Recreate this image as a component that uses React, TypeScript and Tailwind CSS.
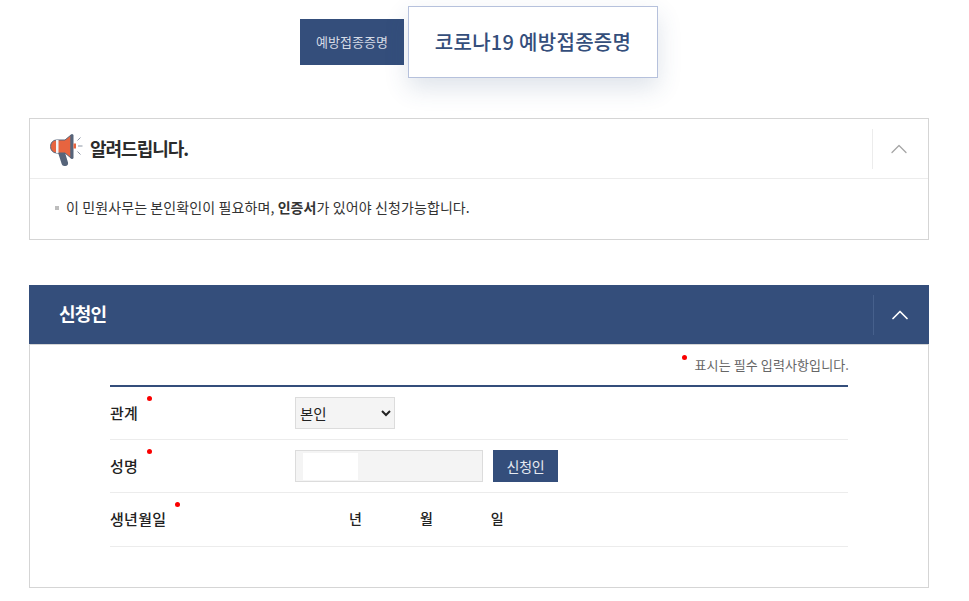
import { ChevronUp } from "lucide-react";

const font = { fontFamily: '"Noto Sans CJK KR", "Noto Sans", sans-serif' };

function Megaphone() {
  return (
    <svg width="33" height="36" viewBox="0 0 33 36" fill="none">
      <path d="M8 21.5h7l3 10c.5 2-.8 3.5-2.5 3.5h-1.2c-1.3 0-2.2-.7-2.6-2z" fill="#56647a" />
      <path d="M6.5 9H15l6-5v23l-6-5H6.5A6 6 0 0 1 .6 15.5a6 6 0 0 1 5.9-6.5z" fill="#e7643f" stroke="#56647a" strokeWidth="1" />
      <rect x="6" y="9" width="2.5" height="13" fill="#f3f3f5" />
      <rect x="20.5" y="3" width="3" height="25" rx="1.5" fill="#56647a" />
      <rect x="23.5" y="12.5" width="2.5" height="5" fill="#e7643f" />
      <path d="M27.5 9.5l3-3M28 15h4.5M27.5 20.5l3 3" stroke="#8d96a5" strokeWidth="1" />
    </svg>
  );
}

function Row({ label, dotLeft, children, height }: { label: string; dotLeft: string; children: React.ReactNode; height: string }) {
  return (
    <div className={`flex items-center border-b border-[#ececec] ${height}`}>
      <div className="relative w-[185px] text-[15px] font-medium tracking-[0.3px] text-[#222]">
        {label}
        <span className={`absolute top-[-6px] h-[5px] w-[5px] rounded-full bg-[#fa0000] ${dotLeft}`} />
      </div>
      {children}
    </div>
  );
}

export default function App() {
  return (
    <div className="h-[601px] w-[969px] overflow-hidden bg-white" style={font}>
      <div className="w-[958px] px-[29px]">
        <div className="flex h-[84px] items-center justify-center gap-[4px]">
          <div className="flex h-[46px] w-[104px] items-center justify-center bg-[#344e7b] text-[13px] text-[#d5dbe6]">
            예방접종증명
          </div>
          <div className="flex h-[72px] w-[250px] items-center justify-center border border-[#b6c1dc] bg-white text-[20px] font-medium tracking-[0.3px] text-[#344e7b] shadow-[0_10px_25px_rgba(52,78,123,0.16)]">
            코로나19 예방접종증명
          </div>
        </div>

        <section className="mt-[34px] h-[122px] border border-[#d5d5d5]">
          <div className="flex h-[60px] items-center border-b border-[#ececec]">
            <div className="ml-[20px] flex items-center gap-[7px]">
              <Megaphone />
              <h2 className="text-[18px] font-bold tracking-[-1px] text-[#2b2b2b]">알려드립니다.</h2>
            </div>
            <div className="ml-auto flex h-[40px] w-[56px] items-center justify-center border-l border-[#ececec] pr-[3px]">
              <ChevronUp className="h-[28px] w-[28px] text-[#a5a5a5]" strokeWidth={1.1} />
            </div>
          </div>
          <p className="flex items-center pl-[25px] pt-[18px] text-[14px] tracking-[0.1px] text-[#333]">
            <span className="mr-[7px] h-[4px] w-[4px] bg-[#bdbdbd]" />
            이 민원사무는 본인확인이 필요하며,&nbsp;<b className="font-bold">인증서</b>가 있어야 신청가능합니다.
          </p>
        </section>

        <section className="mt-[45px]">
          <div className="flex h-[59px] items-center bg-[#344e7b]">
            <h2 className="ml-[30px] pb-[2px] text-[18px] font-bold tracking-[-0.8px] text-white">신청인</h2>
            <div className="ml-auto flex h-[40px] w-[56px] items-center justify-center border-l border-[#46608c] pr-[3px]">
              <ChevronUp className="mt-[1px] h-[28px] w-[28px] text-white" strokeWidth={1.5} />
            </div>
          </div>
          <div className="h-[244px] border border-[#d5d5d5] px-[80px]">
            <div className="relative flex h-[40px] items-center justify-end text-[13px] tracking-[0.1px] text-[#666]">
              <span className="mr-[-1px] pb-[1px]">표시는 필수 입력사항입니다.</span>
              <span className="absolute right-[161px] top-[10px] h-[5px] w-[5px] rounded-full bg-[#fa0000]" />
            </div>
            <div className="h-[2px] w-[738px] bg-[#344e7b]" />
            <Row label="관계" dotLeft="left-[37px]" height="h-[53px]">
              <select className="h-[32px] w-[100px] border border-[#dcdcdc] bg-[#f4f4f4] text-[14.5px] text-[#222]" defaultValue="본인">
                <option>본인</option>
              </select>
            </Row>
            <Row label="성명" dotLeft="left-[37px]" height="h-[53px]">
              <div className="flex h-[32px] w-[188px] items-center border border-[#dcdcdc] bg-[#f4f4f4] pl-[7px]">
                <div className="h-[27px] w-[55px] bg-white" />
              </div>
              <button className="ml-[10px] h-[32px] w-[65px] bg-[#344e7b] text-[14px] tracking-[-0.2px] text-[#e6eaf1]">신청인</button>
            </Row>
            <Row label="생년월일" dotLeft="left-[65px]" height="h-[54px]">
              <div className="flex pb-[2px] text-[14px] font-medium text-[#222]">
                <span className="ml-[54px]">년</span>
                <span className="ml-[58px]">월</span>
                <span className="ml-[58px]">일</span>
              </div>
            </Row>
          </div>
        </section>
      </div>
    </div>
  );
}
